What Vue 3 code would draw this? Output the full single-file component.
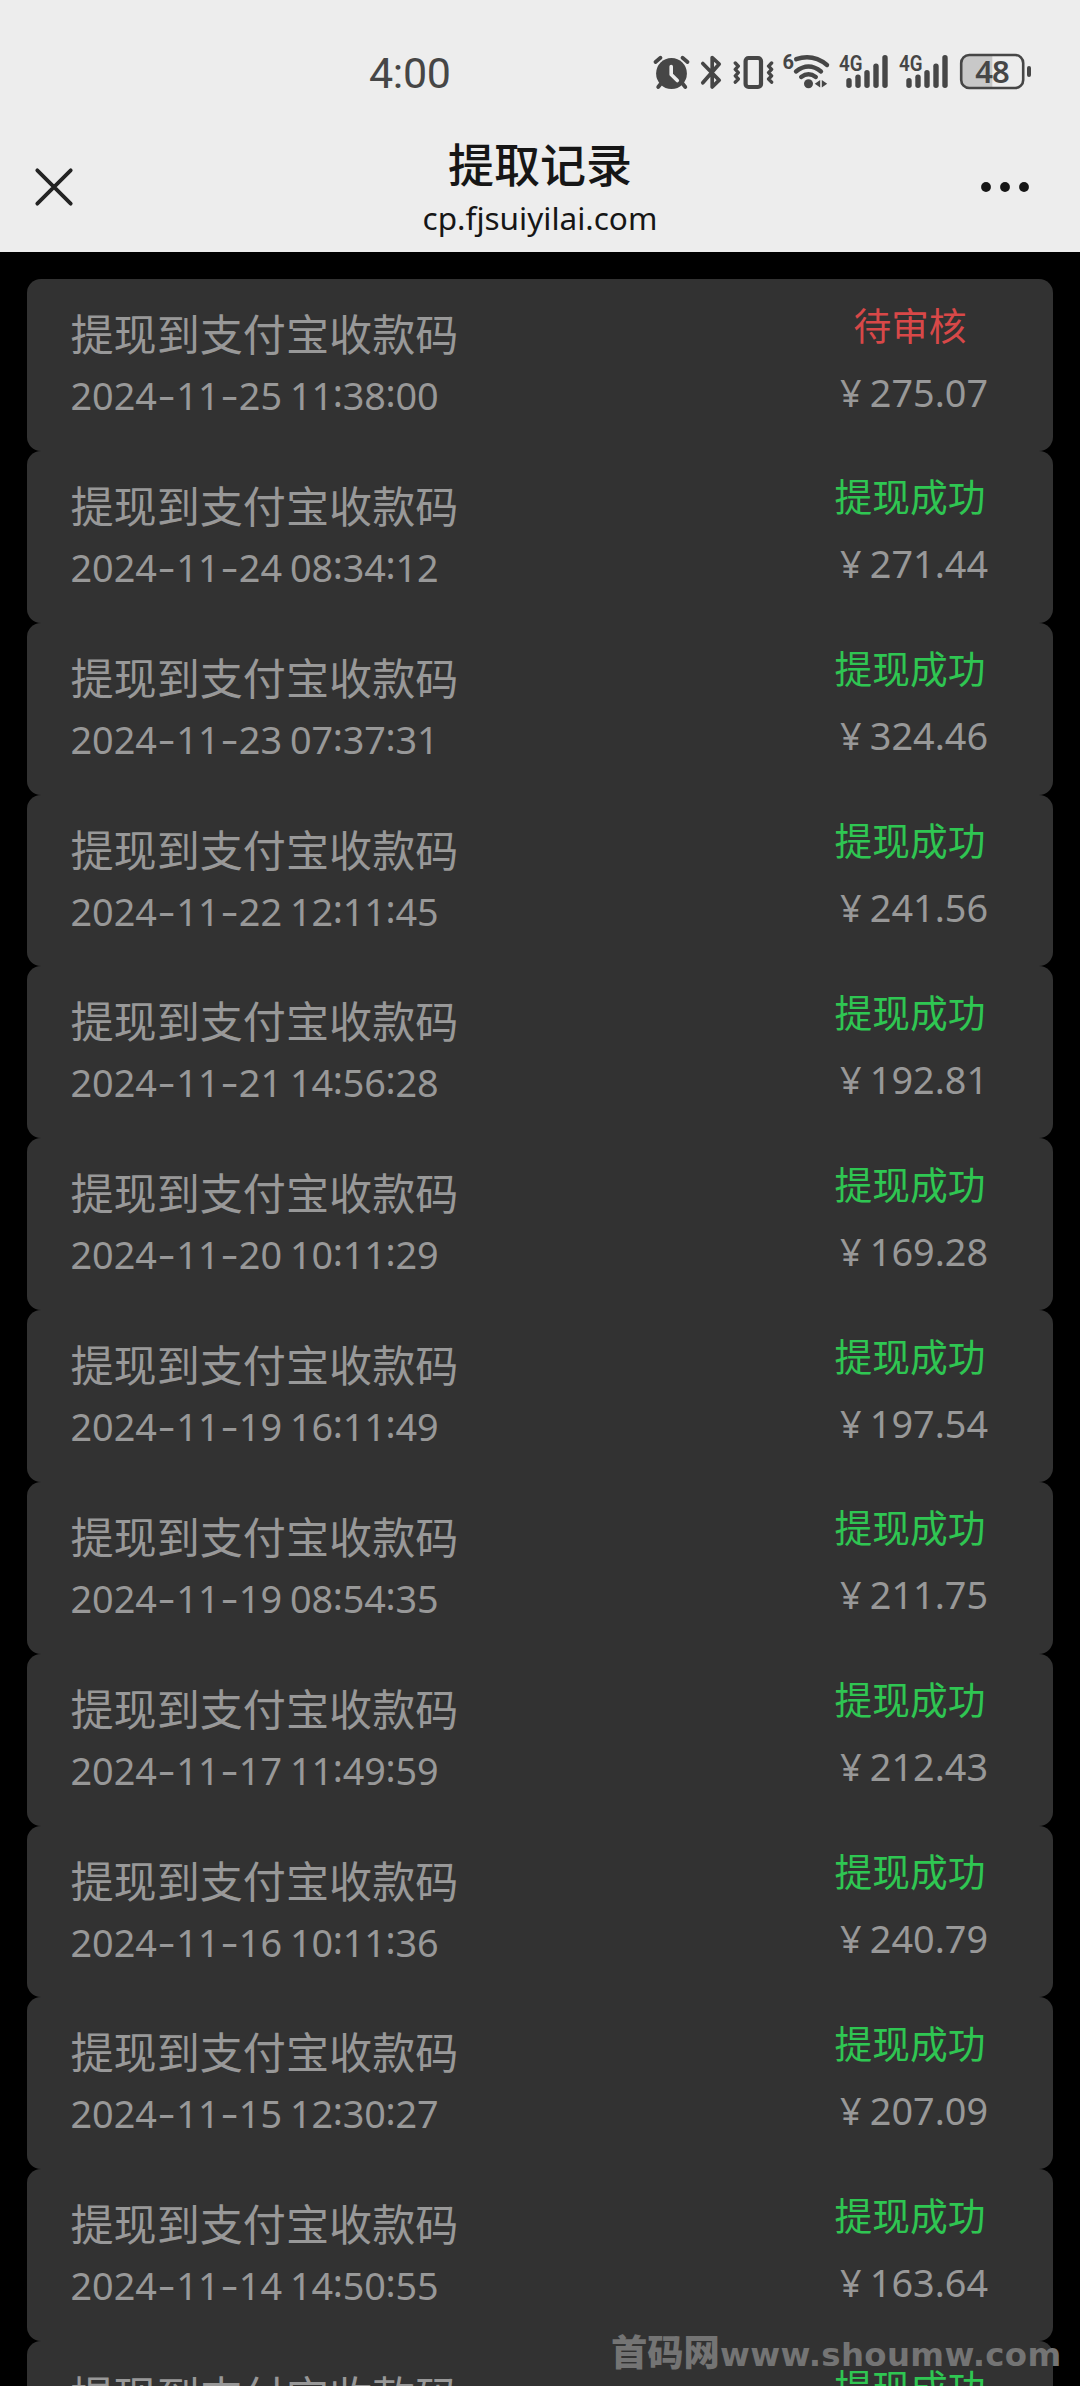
<script setup>
const records = [
  { time: '2024-11-25 11:38:00', amount: '275.07', pending: true },
  { time: '2024-11-24 08:34:12', amount: '271.44' },
  { time: '2024-11-23 07:37:31', amount: '324.46' },
  { time: '2024-11-22 12:11:45', amount: '241.56' },
  { time: '2024-11-21 14:56:28', amount: '192.81' },
  { time: '2024-11-20 10:11:29', amount: '169.28' },
  { time: '2024-11-19 16:11:49', amount: '197.54' },
  { time: '2024-11-19 08:54:35', amount: '211.75' },
  { time: '2024-11-17 11:49:59', amount: '212.43' },
  { time: '2024-11-16 10:11:36', amount: '240.79' },
  { time: '2024-11-15 12:30:27', amount: '207.09' },
  { time: '2024-11-14 14:50:55', amount: '163.64' },
  { time: '', amount: '' },
]

// Split a timestamp so that its separators can be styled on their own
const parts = (time) => time.split(/([-:])/)
const partClass = (p) => (p === '-' ? 'dash' : p === ':' ? 'colon' : 'digits')

const bars = [
  { x: 9, top: 24 },
  { x: 18, top: 20.5 },
  { x: 27, top: 16 },
  { x: 36, top: 9.5 },
  { x: 45, top: 1 },
]
</script>

<template>
  <div class="screen">
    <header class="header">
      <div class="status-bar">
        <span class="clock">4:00</span>
        <div class="status-icons">
          <svg class="ic-alarm" width="38" height="38" viewBox="652 54 38 38">
            <circle cx="671.5" cy="73.5" r="15.4" fill="#464646" />
            <g fill="none" stroke="#464646" stroke-width="3.8" stroke-linecap="round">
              <path d="M655.5 62 660.5 57.8M682.5 57.8 687.5 62M661 83.5 658.2 87M682.5 83.5 685.3 87" />
            </g>
            <path d="M671.2 66.5V74.5L677.3 80.6" fill="none" stroke="#ededed" stroke-width="3.6" stroke-linecap="round" stroke-linejoin="round" />
          </svg>
          <svg class="ic-bt" width="24" height="38" viewBox="700 54 24 38">
            <path d="M702.8 63.5 719.2 80.2 712.2 87V57.6L719.2 64 702.8 82.8" fill="none" stroke="#464646" stroke-width="3.7" stroke-linecap="round" stroke-linejoin="round" />
          </svg>
          <svg class="ic-vib" width="44" height="38" viewBox="732 54 44 38">
            <g fill="none" stroke="#464646" stroke-linecap="round" stroke-linejoin="round">
              <rect x="745.6" y="58" width="15.4" height="29" rx="3" stroke-width="4.2" />
              <path d="M735.3 63 738.3 66.2 735.3 69.4 738.3 72.6 735.3 75.8 738.3 79 735.3 82.2M771.6 63 768.6 66.2 771.6 69.4 768.6 72.6 771.6 75.8 768.6 79 771.6 82.2" stroke-width="3.4" />
            </g>
          </svg>
          <svg class="ic-wifi" width="48" height="38" viewBox="782 54 48 38">
            <text x="782.6" y="69.3" class="six">6</text>
            <g fill="none" stroke="#464646" stroke-width="4.4" stroke-linecap="round">
              <path d="M796.2 59.2Q813 53.5 827 65M796 71.5Q808.5 61.5 821 71.5M801.2 77Q808.5 71.5 815.8 77" />
            </g>
            <circle cx="808.5" cy="83.8" r="4.5" fill="#464646" />
            <path d="M820.2 80V87.4L814.8 83.7ZM821.8 80V87.4L827.2 83.7Z" fill="#464646" />
          </svg>
          <svg v-for="n in 2" :key="n" class="ic-signal" width="50" height="38" viewBox="0 0 50 38">
            <text x="-1" y="17" class="net" textLength="23.5" lengthAdjust="spacingAndGlyphs">4G</text>
            <rect v-for="b in bars" :key="b.x" :x="b.x - 2.7" :y="b.top" width="5.4" :height="34 - b.top" rx="2.7" fill="#464646" />
          </svg>
          <svg class="ic-batt" width="74" height="38" viewBox="959 54 74 38">
            <path d="M969 55.2H992.3V87.8H969Q961.2 87.8 961.2 80V63Q961.2 55.2 969 55.2Z" fill="#c8c8c8" />
            <rect x="961.2" y="55" width="62" height="33" rx="8" fill="none" stroke="#464646" stroke-width="2.6" />
            <rect x="1027" y="66" width="4" height="11" rx="2" fill="#464646" />
            <text x="992" y="82.5" class="level" text-anchor="middle">48</text>
          </svg>
        </div>
      </div>
      <div class="nav-bar">
        <svg class="close" width="40" height="40" viewBox="34 167 40 40">
          <path d="M37.3 170.3 70.7 203.7M70.7 170.3 37.3 203.7" stroke="#242424" stroke-width="3.8" stroke-linecap="round" />
        </svg>
        <div class="titles">
          <div class="title">提取记录</div>
          <div class="url">cp.fjsuiyilai.com</div>
        </div>
        <svg class="more" width="50" height="12" viewBox="0 0 50 12">
          <circle v-for="x in [6, 25, 44]" :key="x" :cx="x" cy="6" r="4.9" fill="#161616" />
        </svg>
      </div>
    </header>

    <main class="list">
      <article v-for="r in records" :key="r.time" class="record">
        <div class="info">
          <div class="name">提现到支付宝收款码</div>
          <div v-if="r.time" class="time"><span v-for="(p, i) in parts(r.time)" :key="i" :class="partClass(p)">{{ p }}</span></div>
        </div>
        <div class="result">
          <div class="state" :class="{ pending: r.pending }">{{ r.pending ? '待审核' : '提现成功' }}</div>
          <div v-if="r.amount" class="amount"><span class="yen">¥</span>{{ r.amount }}</div>
        </div>
      </article>
    </main>

    <div class="watermark"><span class="wm-cn">首码网</span><span class="wm-url">www.shoumw.com</span></div>
  </div>
</template>

<style>
body {
  margin: 0;
  background: #000;
}
</style>

<style scoped>
.screen {
  position: relative;
  width: 1080px;
  height: 2386px;
  overflow: hidden;
  background: #000;
  font-family: "Noto Sans", "Noto Sans CJK SC", sans-serif;
}
.header {
  height: 252px;
  background: #ededed;
}
.status-bar {
  display: flex;
  justify-content: space-between;
  height: 122px;
  padding: 0 47px 0 369px;
}
.clock {
  margin-top: 48px;
  font: 400 43px/50px Roboto, sans-serif;
  letter-spacing: -0.3px;
  color: #464646;
}
.status-icons {
  display: flex;
  margin-top: 54px;
}
.status-icons svg {
  display: block;
  overflow: visible;
}
.ic-alarm { margin-right: 10px; }
.ic-bt { margin-right: 8px; }
.ic-vib { margin-right: 6px; }
.ic-wifi { margin-right: 10px; }
.ic-signal { margin-right: 10px; }
.ic-signal + .ic-batt { margin-left: -1px; }
.six {
  font: 700 20px Roboto, sans-serif;
  fill: #464646;
}
.net {
  font: 600 22px Roboto, sans-serif;
  fill: #464646;
}
.level {
  font: 600 31px "Noto Sans", sans-serif;
  letter-spacing: -1px;
  fill: #464646;
}
.nav-bar {
  display: flex;
  justify-content: space-between;
  padding: 0 50px 0 34px;
}
.close {
  margin-top: 45px;
}
.more {
  margin-top: 59px;
}
.titles {
  flex: 1;
  padding-left: 26px;
  text-align: center;
  color: #161616;
}
.title {
  margin-top: 12px;
  font: 500 46px/56px "Noto Sans CJK SC", sans-serif;
}
.url {
  margin-top: 8px;
  font-size: 31.5px;
  line-height: 40px;
}
.list {
  padding: 27px 27px 0;
}
.record {
  display: flex;
  justify-content: space-between;
  box-sizing: border-box;
  height: 171.85px;
  padding: 0 33px 0 43.5px;
  border-radius: 14px;
  background: #323232;
  color: #989898;
}
.name {
  margin-top: 26px;
  font: 400 43.1px/54px "Noto Sans CJK SC", sans-serif;
  white-space: nowrap;
}
.time {
  margin-top: 12px;
  font-size: 37.8px;
  line-height: 50px;
  white-space: pre;
  word-spacing: -2px;
}
.dash {
  display: inline-block;
  width: 19.3px;
  text-align: center;
  transform: translateY(-1.5px) scaleX(1.45);
}
.colon {
  display: inline-block;
  width: 9.5px;
  text-align: center;
  text-indent: -0.3px;
  transform: translateY(-3.5px);
}
.result {
  width: 220px;
  text-align: center;
}
.state {
  margin-top: 20.5px;
  font: 400 37.7px/48px "Noto Sans CJK SC", sans-serif;
  color: #2fc652;
}
.state.pending {
  color: #d84848;
}
.amount {
  margin-top: 20px;
  font-size: 37.8px;
  line-height: 50px;
}
.yen {
  display: inline-block;
  width: 37.8px;
  text-align: center;
}
.watermark {
  position: absolute;
  left: 611px;
  top: 2328px;
  display: flex;
  align-items: baseline;
  color: #747474;
  white-space: nowrap;
}
.wm-cn {
  font: 900 36.3px/44px "Noto Sans CJK SC", sans-serif;
}
.wm-url {
  font: 700 32.4px/44px "DejaVu Sans", sans-serif;
  letter-spacing: 0.35px;
}
</style>
